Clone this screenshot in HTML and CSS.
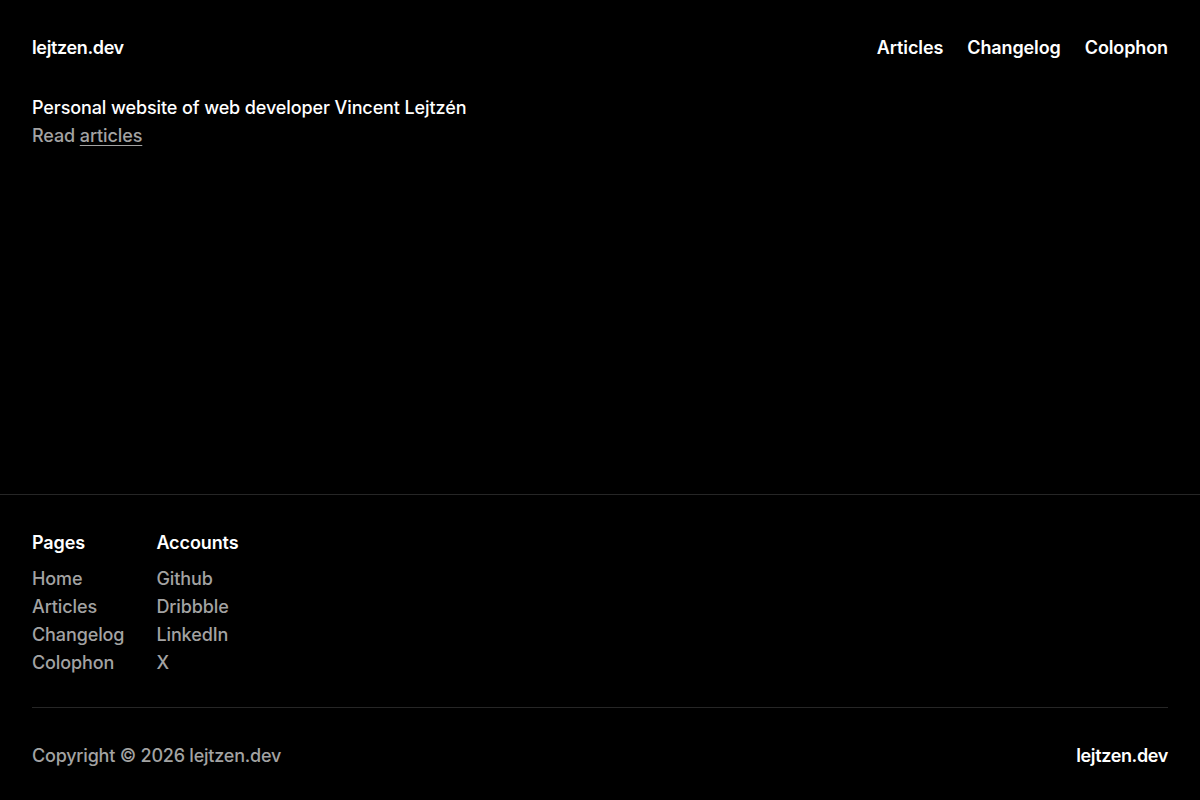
FILE: index.html
```html
<!DOCTYPE html>
<html lang="en">
<head>
<meta charset="utf-8">
<title>lejtzen.dev</title>
<link rel="stylesheet" href="styles.css">
</head>
<body>
<header class="site-header">
  <a class="brand" href="#">lejtzen.dev</a>
  <nav class="nav">
    <a href="#">Articles</a>
    <a href="#">Changelog</a>
    <a href="#">Colophon</a>
  </nav>
</header>
<main class="main">
  <p class="lead">Personal website of web developer Vincent Lejtzén</p>
  <p class="sub">Read <a href="#">articles</a></p>
</main>
<footer class="site-footer">
  <div class="footer-inner">
    <div class="cols">
      <div class="col">
        <h2>Pages</h2>
        <ul>
          <li><a href="#">Home</a></li>
          <li><a href="#">Articles</a></li>
          <li><a href="#">Changelog</a></li>
          <li><a href="#">Colophon</a></li>
        </ul>
      </div>
      <div class="col">
        <h2>Accounts</h2>
        <ul>
          <li><a href="#">Github</a></li>
          <li><a href="#">Dribbble</a></li>
          <li><a href="#">LinkedIn</a></li>
          <li><a href="#">X</a></li>
        </ul>
      </div>
    </div>
    <div class="bottom">
      <span class="copy">Copyright © 2026 lejtzen.dev</span>
      <a class="brand" href="#">lejtzen.dev</a>
    </div>
  </div>
</footer>
</body>
</html>
```
FILE: styles.css
```css
* { box-sizing: border-box; }
html, body { margin: 0; padding: 0; }
body {
  background: #000;
  color: #fff;
  font-family: Inter, "Noto Sans", sans-serif;
  font-size: 18px;
  line-height: 28px;
  font-weight: 500;
  letter-spacing: -0.006em;
  min-height: 100vh;
  display: flex;
  flex-direction: column;
  -webkit-font-smoothing: antialiased;
}
a { color: inherit; text-decoration: none; }
.site-header {
  display: flex;
  justify-content: space-between;
  padding: 34px 32px 0;
}
.brand { font-weight: 600; color: #fff; letter-spacing: -0.02em; }
.nav { display: flex; gap: 24px; font-weight: 600; }
.main { flex: 1; padding: 32px 32px 0; }
.main p { margin: 0; }
.sub { color: #a3a3a3; }
.sub a { text-decoration: underline; text-underline-offset: 3px; text-decoration-thickness: 1px; }
.site-footer { border-top: 1px solid #262626; }
.footer-inner { padding: 34px 32px 30px; }
.cols { display: flex; gap: 32px; padding-bottom: 30px; border-bottom: 1px solid #262626; }
.col h2 { margin: 0 0 8px; font-size: 18px; line-height: 28px; font-weight: 600; }
.col ul { list-style: none; margin: 0; padding: 0; }
.col a { color: #a3a3a3; }
.bottom { display: flex; justify-content: space-between; padding-top: 34px; }
.copy { color: #a3a3a3; letter-spacing: -0.012em; }
```
